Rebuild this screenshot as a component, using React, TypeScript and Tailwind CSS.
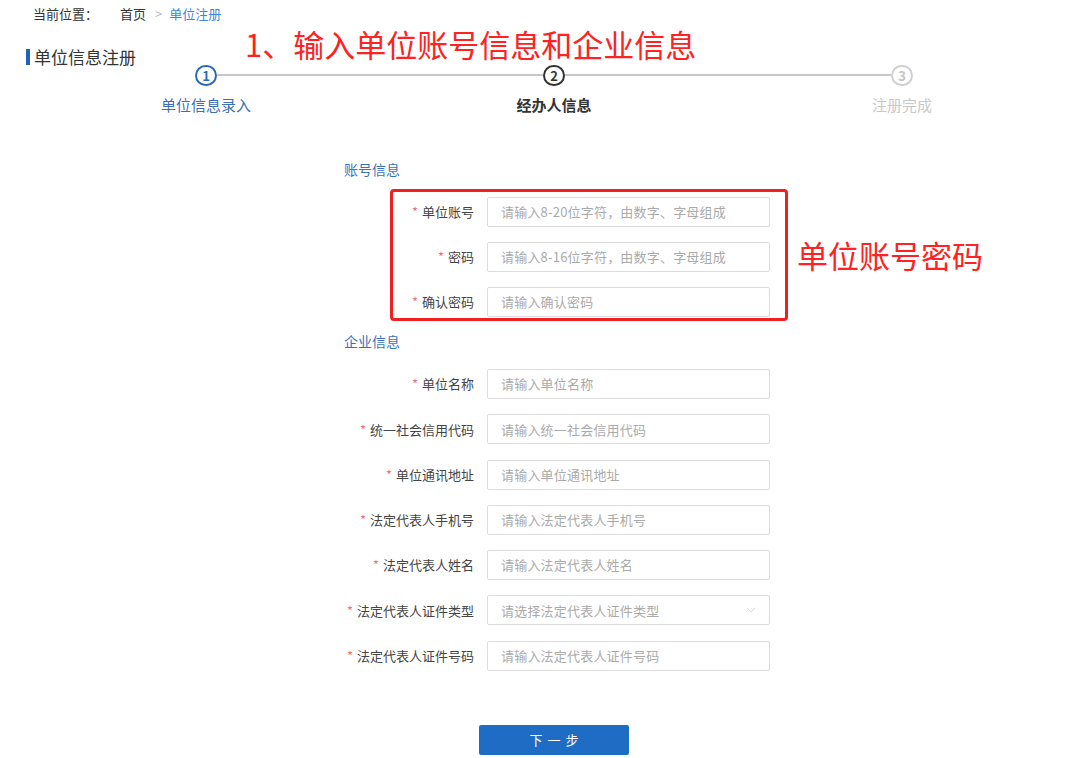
import { ChevronDown } from 'lucide-react';

const font = { fontFamily: '"Noto Sans CJK SC", "Liberation Sans", sans-serif' };

type Field = { label: string; placeholder: string; select?: boolean };

const accountFields: Field[] = [
  { label: '单位账号', placeholder: '请输入8-20位字符，由数字、字母组成' },
  { label: '密码', placeholder: '请输入8-16位字符，由数字、字母组成' },
  { label: '确认密码', placeholder: '请输入确认密码' },
];

const companyFields: Field[] = [
  { label: '单位名称', placeholder: '请输入单位名称' },
  { label: '统一社会信用代码', placeholder: '请输入统一社会信用代码' },
  { label: '单位通讯地址', placeholder: '请输入单位通讯地址' },
  { label: '法定代表人手机号', placeholder: '请输入法定代表人手机号' },
  { label: '法定代表人姓名', placeholder: '请输入法定代表人姓名' },
  { label: '法定代表人证件类型', placeholder: '请选择法定代表人证件类型', select: true },
  { label: '法定代表人证件号码', placeholder: '请输入法定代表人证件号码' },
];

function Row({ f }: { f: Field }) {
  return (
    <div className="flex items-center h-[30px]">
      <div className="w-[130px] text-right text-[13px] text-[#444] whitespace-nowrap">
        <span className="text-[#f07070] mr-[4px]">*</span>
        {f.label}
      </div>
      <div className="ml-[13px] w-[283px] h-[30px] border border-[#dcdcdc] rounded-[2px] flex items-center pl-[13px] pr-[10px] text-[13px] text-[#aaa] tracking-[0.2px]">
        <span className="flex-1">{f.placeholder}</span>
        {f.select && <ChevronDown className="w-[16px] h-[16px] text-[#cfcfcf]" strokeWidth={1.2} />}
      </div>
    </div>
  );
}

function Step({ n, label, state }: { n: number; label: string; state: 'done' | 'active' | 'todo' }) {
  const circle =
    state === 'done'
      ? 'border-[#2c6ab8] text-[#2c6ab8]'
      : state === 'active'
      ? 'border-[#333] text-[#333]'
      : 'border-[#cfcfcf] text-[#c4c4c4]';
  const text =
    state === 'done' ? 'text-[#3b6fb3]' : state === 'active' ? 'text-[#333] font-bold' : 'text-[#c8c8c8]';
  return (
    <div className="w-[22px] flex flex-col items-center">
      <div className={`w-[22px] h-[21px] rounded-full border-2 flex items-center justify-center text-[13px] leading-none font-bold ${circle}`}>{n}</div>
      <div className={`mt-[9px] text-[15px] leading-[20px] whitespace-nowrap ${text}`}>{label}</div>
    </div>
  );
}

export default function App() {
  return (
    <div className="relative w-[1080px] h-[758px] bg-white overflow-hidden" style={font}>
      <div className="h-[28px] flex items-center pl-[33px] text-[13px] text-[#333]">
        <span>当前位置：</span>
        <span className="ml-[22px]">首页</span>
        <span className="ml-[9px] text-[#bbb]">&gt;</span>
        <span className="ml-[7px] text-[#3d86d8]">单位注册</span>
      </div>

      <div className="mt-[20px] h-[17px] flex items-center pl-[26px]">
        <div className="w-[4px] h-[16px] bg-[#1e63b8]" />
        <span className="ml-[4px] text-[17px] text-[#333] leading-[17px]">单位信息注册</span>
      </div>

      {/* annotation */}
      <div className="absolute left-[245px] top-[25px] text-[31px] leading-[38px] text-[#ff2222]">1、输入单位账号信息和企业信息</div>

      <div className="ml-[195px] w-[718px] flex">
        <Step n={1} label="单位信息录入" state="done" />
        <div className="flex-1 h-[2px] bg-[#c8c8c8] mt-[9px]" />
        <Step n={2} label="经办人信息" state="active" />
        <div className="flex-1 h-[2px] bg-[#c8c8c8] mt-[9px]" />
        <Step n={3} label="注册完成" state="todo" />
      </div>

      <div className="ml-[344px] mt-[44px]">
        <div className="text-[14px] leading-[20px] text-[#3a73bd]">账号信息</div>
        <div className="relative mt-[18px] flex flex-col gap-[15px]">
          {accountFields.map((f) => (
            <Row key={f.label} f={f} />
          ))}
          <div className="absolute left-[46px] top-[-8px] w-[398px] h-[132px] border-[3px] border-[#f02020] rounded-[4px] pointer-events-none" />
          <div className="absolute left-[453px] top-[39px] text-[31px] leading-[38px] text-[#ff2222] whitespace-nowrap">单位账号密码</div>
        </div>

        <div className="mt-[14px] text-[14px] leading-[20px] text-[#3a73bd]">企业信息</div>
        <div className="mt-[18px] flex flex-col gap-[15.3px]">
          {companyFields.map((f) => (
            <Row key={f.label} f={f} />
          ))}
        </div>
      </div>

      <div className="ml-[479px] mt-[54px] w-[150px] h-[30px] bg-[#1e6cc4] rounded-[2px] flex items-center justify-center text-white text-[13px] tracking-[5px] pl-[5px]">
        下一步
      </div>
    </div>
  );
}
